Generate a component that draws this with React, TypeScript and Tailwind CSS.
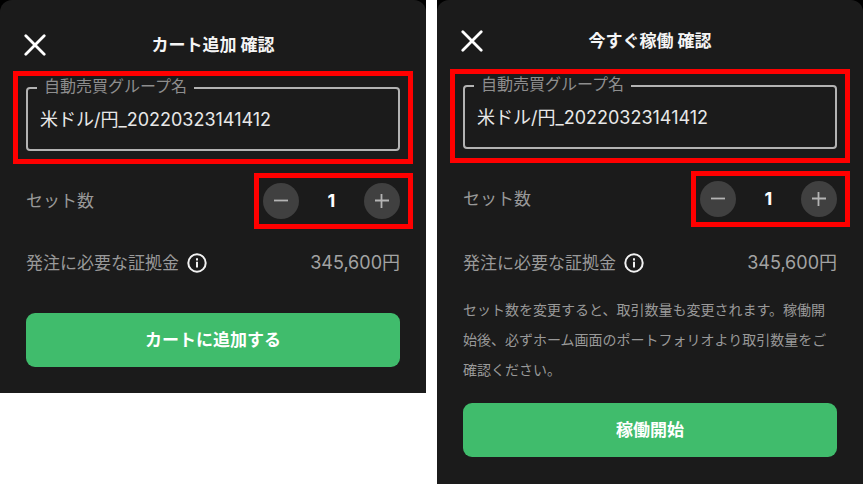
import { useId, useState } from "react";

type DialogProps = {
  title: string;
  action: string;
  note?: string;
  headerClass: string;
  fieldClass: string;
  setsClass: string;
  marginClass: string;
  actionClass: string;
};

function CloseIcon() {
  return (
    <svg width="22" height="22" viewBox="0 0 22 22" fill="none" stroke="#ffffff" strokeWidth="2.8" strokeLinecap="round" aria-hidden="true">
      <path d="M1.8 1.8 20.2 20.2M20.2 1.8 1.8 20.2" />
    </svg>
  );
}

function InfoIcon() {
  return (
    <svg width="20" height="20" viewBox="0 0 20 20" fill="none" stroke="#f2f2f2" strokeWidth="2" aria-hidden="true">
      <circle cx="10" cy="10" r="8.7" />
      <path d="M10 8.8V14.4" />
      <path d="M10 5.2V7.4" />
    </svg>
  );
}

function StepIcon({ plus = false }: { plus?: boolean }) {
  return (
    <svg width="16" height="16" viewBox="0 0 16 16" fill="none" stroke="#b4b4b4" strokeWidth="1.8" aria-hidden="true">
      <path d={plus ? "M1 7.5H15M7.5 1V15" : "M1 7.5H15"} />
    </svg>
  );
}

function ConfirmDialog({ title, action, note, headerClass, fieldClass, setsClass, marginClass, actionClass }: DialogProps) {
  const id = useId();
  const [name, setName] = useState("米ドル/円_20220323141412");
  const [sets, setSets] = useState(1);

  return (
    <div className="min-w-0 flex-1 bg-black">
      <section aria-label={title} className="rounded-t-[12px] bg-[#1b1b1b] px-[13px]">
        <header className={`grid grid-cols-[1fr_auto_1fr] items-center px-[11px] ${headerClass}`}>
          <button type="button" aria-label="閉じる" className="flex size-6 items-center">
            <CloseIcon />
          </button>
          <h1 className="text-[17px] leading-6 font-bold text-[#f5f5f5]">{title}</h1>
        </header>

        <div className={`border-5 border-[#ff0000] px-2 ${fieldClass}`}>
          <fieldset className="min-w-0 rounded-[4px] border-2 border-[#b3b3b3] px-[9px]">
            <legend className="px-[7px] pb-1 text-[16px] leading-5 text-[#8e8e8e]">
              <label htmlFor={id} className="block">自動売買グループ名</label>
            </legend>
            <input
              id={id}
              type="text"
              value={name}
              onChange={(e) => setName(e.target.value)}
              className="mb-[13px] block h-9 w-full bg-transparent pl-[3px] text-[18px] text-[#e8e8e8] outline-none"
            />
          </fieldset>
        </div>

        <div className={`flex items-center justify-between pl-[13px] ${setsClass}`}>
          <span className="text-[17px] leading-6 text-[#999999]">セット数</span>
          <div className="flex w-[159px] items-center justify-between border-5 border-[#ff0000] py-[5px] pr-2 pl-1">
            <button
              type="button"
              aria-label="減らす"
              onClick={() => setSets(Math.max(1, sets - 1))}
              className="flex size-9 items-center justify-center rounded-full bg-[#404040]"
            >
              <StepIcon />
            </button>
            <output className="text-[18px] leading-6 font-bold text-white">{sets}</output>
            <button
              type="button"
              aria-label="増やす"
              onClick={() => setSets(sets + 1)}
              className="flex size-9 items-center justify-center rounded-full bg-[#404040]"
            >
              <StepIcon plus />
            </button>
          </div>
        </div>

        <div className={`flex items-center justify-between px-[13px] text-[17px] leading-6 text-[#999999] ${marginClass}`}>
          <div className="flex items-center gap-2">
            <span>発注に必要な証拠金</span>
            <button type="button" aria-label="証拠金について">
              <InfoIcon />
            </button>
          </div>
          <span className="text-[18px] text-[#a3a3a3]">345,600円</span>
        </div>

        {note && <p className="mt-5 px-[13px] text-[14px] leading-[30px] text-[#999999]">{note}</p>}

        <div className={`px-[13px] ${actionClass}`}>
          <button type="button" className="h-[54px] w-full rounded-[9px] bg-[#40bc6c] text-[17px] leading-6 font-bold text-white">
            {action}
          </button>
        </div>
      </section>
    </div>
  );
}

export default function App() {
  return (
    <main lang="ja" className="flex items-start gap-[11px] bg-white font-[Inter,'Noto_Sans_CJK_JP',sans-serif]">
      <ConfirmDialog
        title="カート追加 確認"
        action="カートに追加する"
        headerClass="pt-[33px] pb-[14px]"
        fieldClass="pb-2"
        setsClass="mt-[9px]"
        marginClass="mt-[22px]"
        actionClass="pt-[38px] pb-[26px]"
      />
      <ConfirmDialog
        title="今すぐ稼働 確認"
        action="稼働開始"
        note="セット数を変更すると、取引数量も変更されます。稼働開始後、必ずホーム画面のポートフォリオより取引数量をご確認ください。"
        headerClass="pt-[29px] pb-4"
        fieldClass="pb-[9px]"
        setsClass="mt-2"
        marginClass="mt-6"
        actionClass="pt-[18px] pb-[27px]"
      />
    </main>
  );
}
